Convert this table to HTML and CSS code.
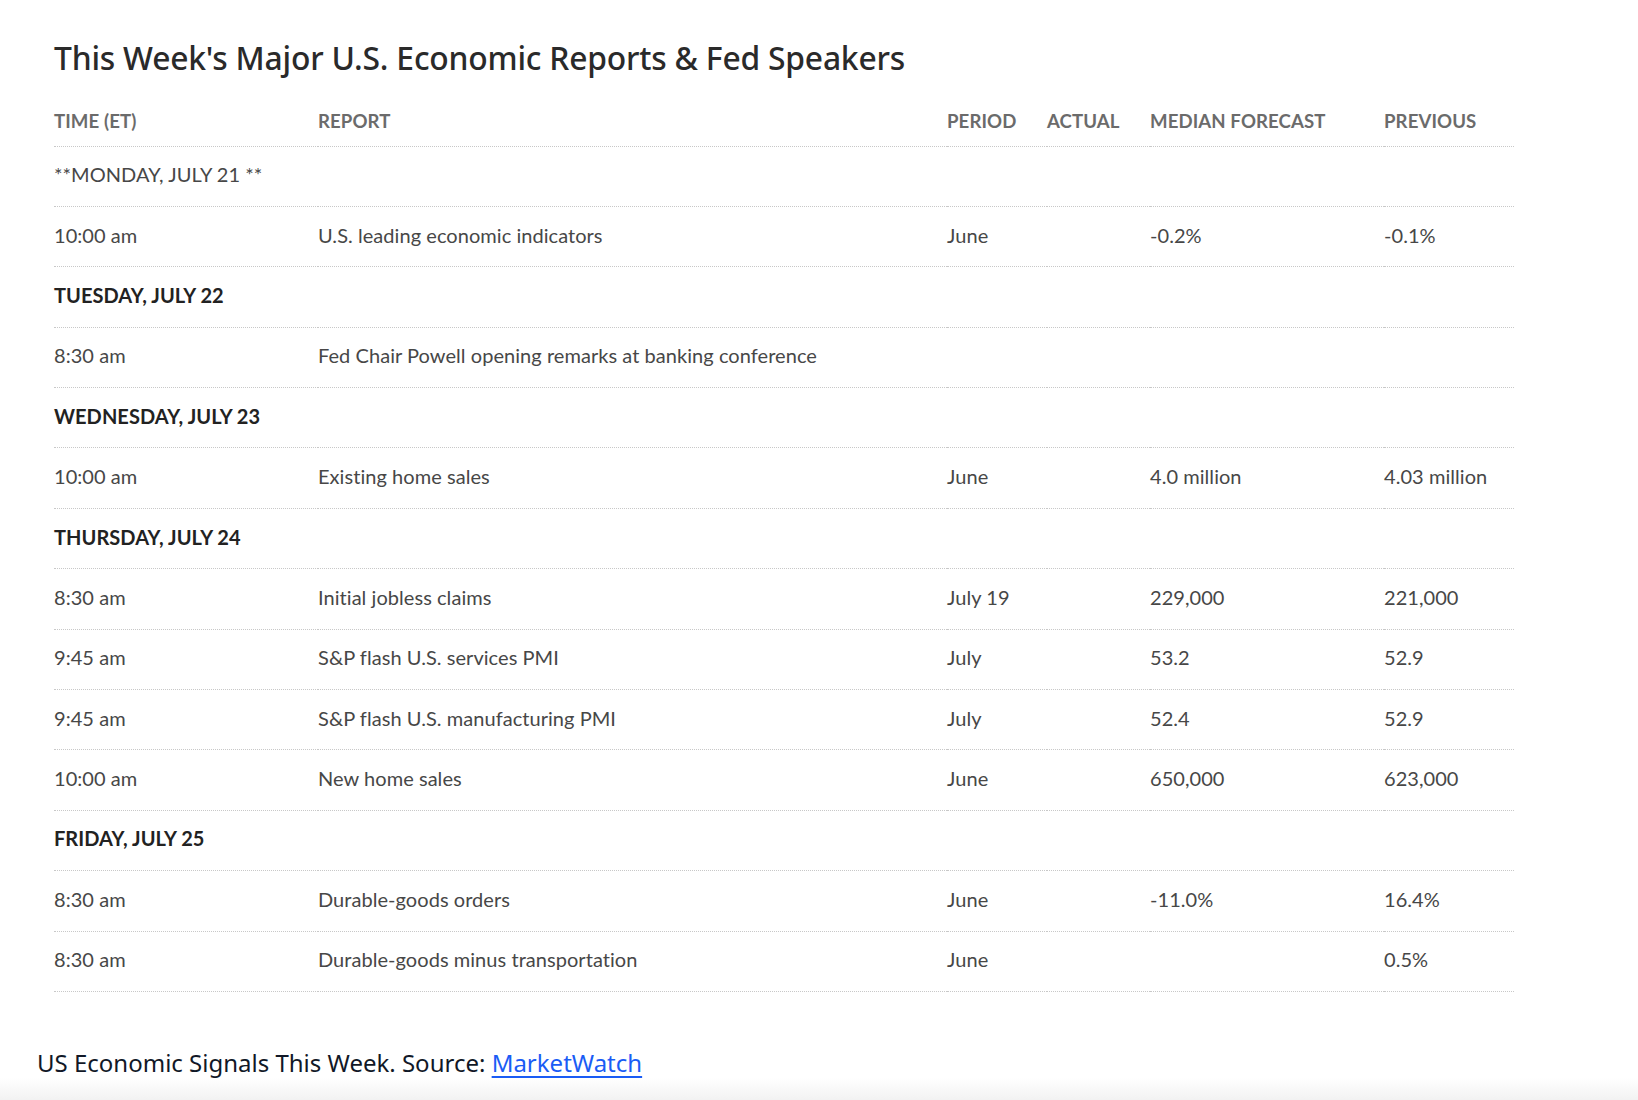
FILE: index.html
```html
<html lang="en">
<head>
    <meta charset="UTF-8">
    <meta name="viewport" content="width=device-width, initial-scale=1.0">
    <title>Economic Reports</title>
    <link rel="stylesheet" href="styles.css">
</head>
<body>
    <div class="card">
        <h2 class="title">This Week's Major U.S. Economic Reports &amp; Fed Speakers</h2>
        <table class="reports">
            <colgroup>
                <col class="c-time">
                <col class="c-report">
                <col class="c-period">
                <col class="c-actual">
                <col class="c-median">
                <col class="c-prev">
            </colgroup>
            <thead>
                <tr>
                    <th>TIME (ET)</th>
                    <th>REPORT</th>
                    <th>PERIOD</th>
                    <th>ACTUAL</th>
                    <th>MEDIAN FORECAST</th>
                    <th>PREVIOUS</th>
                </tr>
            </thead>
            <tbody>
                <tr class="day light"><td colspan="6">**MONDAY, JULY 21 **</td></tr>
                <tr><td>10:00 am</td><td>U.S. leading economic indicators</td><td>June</td><td></td><td>-0.2%</td><td>-0.1%</td></tr>
                <tr class="day"><td colspan="6">TUESDAY, JULY 22</td></tr>
                <tr><td>8:30 am</td><td>Fed Chair Powell opening remarks at banking conference</td><td></td><td></td><td></td><td></td></tr>
                <tr class="day"><td colspan="6">WEDNESDAY, JULY 23</td></tr>
                <tr><td>10:00 am</td><td>Existing home sales</td><td>June</td><td></td><td>4.0 million</td><td>4.03 million</td></tr>
                <tr class="day"><td colspan="6">THURSDAY, JULY 24</td></tr>
                <tr><td>8:30 am</td><td>Initial jobless claims</td><td>July 19</td><td></td><td>229,000</td><td>221,000</td></tr>
                <tr><td>9:45 am</td><td>S&amp;P flash U.S. services PMI</td><td>July</td><td></td><td>53.2</td><td>52.9</td></tr>
                <tr><td>9:45 am</td><td>S&amp;P flash U.S. manufacturing PMI</td><td>July</td><td></td><td>52.4</td><td>52.9</td></tr>
                <tr><td>10:00 am</td><td>New home sales</td><td>June</td><td></td><td>650,000</td><td>623,000</td></tr>
                <tr class="day"><td colspan="6">FRIDAY, JULY 25</td></tr>
                <tr><td>8:30 am</td><td>Durable-goods orders</td><td>June</td><td></td><td>-11.0%</td><td>16.4%</td></tr>
                <tr><td>8:30 am</td><td>Durable-goods minus transportation</td><td>June</td><td></td><td></td><td>0.5%</td></tr>
            </tbody>
        </table>
    </div>
    <p class="caption">US Economic Signals This Week. Source: <a href="#">MarketWatch</a></p>
</body>
</html>
```
FILE: styles.css
```css
body {
    margin: 0;
    height: 1100px;
    background: linear-gradient(to bottom, #ffffff 1078px, #f2f2f2 1100px);
    font-family: Lato, "Open Sans", sans-serif;
    overflow: hidden;
}
.card {
    padding: 36px 0 0 54px;
}
.title {
    margin: 0;
    font-family: "Noto Sans", sans-serif;
    font-weight: 500;
    font-size: 31.8px;
    color: #2a2a2a;
    letter-spacing: -0.2px;
    line-height: 44px;
}
.reports {
    margin-top: 30px;
    border-collapse: collapse;
    width: 1460px;
    table-layout: fixed;
}
.c-time { width: 264px; }
.c-report { width: 629px; }
.c-period { width: 100px; }
.c-actual { width: 103px; }
.c-median { width: 234px; }
.c-prev { width: 130px; }
.reports th,
.reports td {
    padding: 0;
    text-align: left;
    border-bottom: 1px dotted #c8c8c8;
    white-space: nowrap;
}
.reports th {
    height: 36px;
    vertical-align: top;
    font-size: 18.6px;
    font-weight: 700;
    color: #6b6b6b;
    letter-spacing: 0.1px;
}
.reports td {
    height: 60.4px;
    padding-bottom: 4px;
    font-size: 20px;
    color: #474747;
    letter-spacing: 0.05px;
}
.reports .day td {
    font-weight: 700;
    color: #222;
}
.reports .day.light td {
    font-weight: 400;
    color: #474747;
}
.caption {
    margin: 54px 0 0 37px;
    font-family: "Noto Sans", sans-serif;
    font-size: 24px;
    color: #111827;
}
.caption a {
    color: #1a5cf5;
    text-decoration-thickness: 2px;
    text-underline-offset: 4px;
}
```
